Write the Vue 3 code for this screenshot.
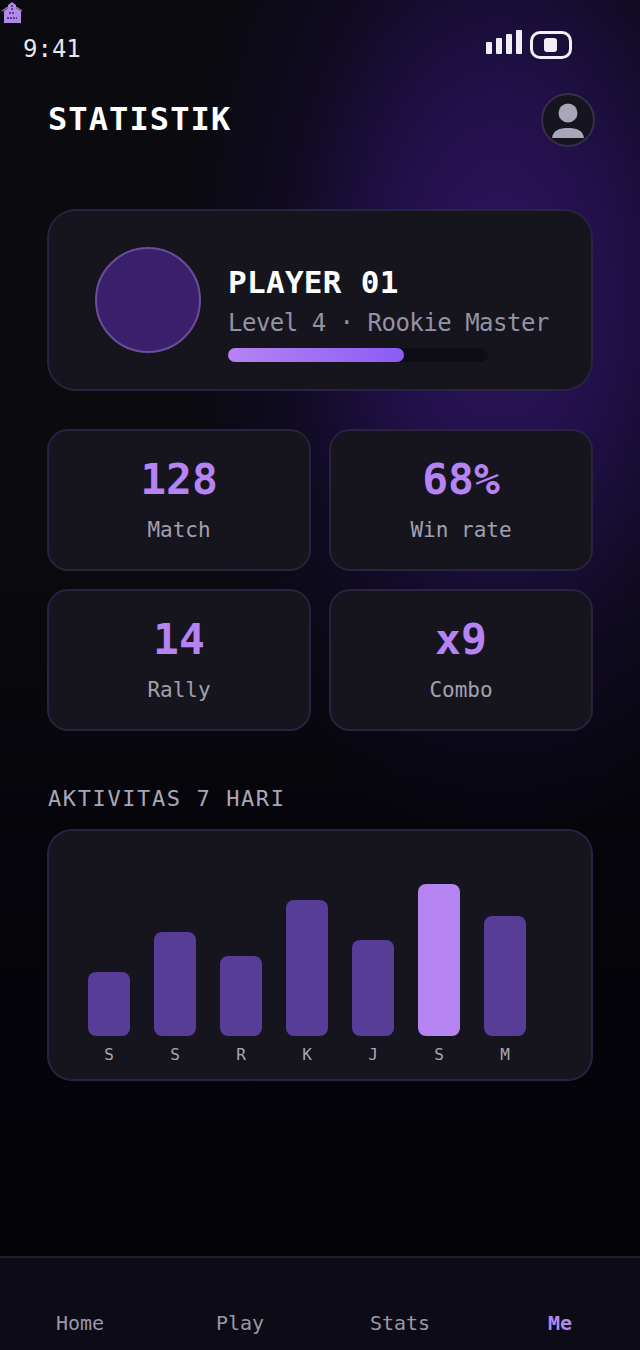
<script setup>
const stats = [
  { value: '128', label: 'Match' },
  { value: '68%', label: 'Win rate' },
  { value: '14', label: 'Rally' },
  { value: 'x9', label: 'Combo' },
];
const bars = [
  { day: 'S', height: 64 },
  { day: 'S', height: 104 },
  { day: 'R', height: 80 },
  { day: 'K', height: 136 },
  { day: 'J', height: 96 },
  { day: 'S', height: 152, active: true },
  { day: 'M', height: 120 },
];
const signal = [12, 16, 20, 24];
const tabs = ['Home', 'Play', 'Stats', 'Me'];
</script>

<template>
  <div class="screen">
    <svg class="corner-icon" width="22" height="24" viewBox="0 0 22 24">
      <path d="M11 2 L15 5 L15 8 L20 11 L20 23 L3 23 L3 11 L7 8 L7 5 Z" fill="#b388eb" />
      <path d="M1 11 L7 7 M21 11 L15 7" stroke="#8a7aa8" stroke-width="1.5" />
      <path d="M11 5 V10 M8 13 H14 M6 18 H16" stroke="#3a2a5c" stroke-width="1.5" stroke-dasharray="2 1" />
    </svg>

    <div class="status">
      <span class="time">9:41</span>
      <div class="status-right">
        <div class="signal">
          <i v-for="h in signal" :key="h" :style="{ height: h + 'px' }"></i>
        </div>
        <div class="battery"><i></i></div>
      </div>
    </div>

    <header class="top">
      <h1>STATISTIK</h1>
      <div class="avatar-small">
        <svg width="50" height="50" viewBox="0 0 50 50">
          <circle cx="25" cy="18" r="9.5" fill="#a9a6b8" />
          <path d="M9 43 C10 35 17 33 25 33 C33 33 40 35 41 43 Z" fill="#a9a6b8" />
        </svg>
      </div>
    </header>

    <section class="card profile">
      <div class="avatar"></div>
      <div class="info">
        <div class="name">PLAYER 01</div>
        <div class="level">Level 4 · Rookie Master</div>
        <div class="track"><div class="fill"></div></div>
      </div>
    </section>

    <section class="stats">
      <div v-for="s in stats" :key="s.label" class="card stat">
        <div class="value">{{ s.value }}</div>
        <div class="label">{{ s.label }}</div>
      </div>
    </section>

    <h2 class="section-title">AKTIVITAS 7 HARI</h2>

    <section class="card chart">
      <div v-for="(b, i) in bars" :key="i" class="col">
        <div class="bar" :class="{ active: b.active }" :style="{ height: b.height + 'px' }"></div>
        <span class="day">{{ b.day }}</span>
      </div>
    </section>

    <nav class="nav">
      <span v-for="t in tabs" :key="t" class="tab" :class="{ active: t === 'Me' }">{{ t }}</span>
    </nav>
  </div>
</template>

<style scoped>
.screen {
  position: relative;
  width: 640px;
  height: 1350px;
  display: flex;
  flex-direction: column;
  overflow: hidden;
  font-family: "DejaVu Sans Mono", "Liberation Mono", monospace;
  color: #fff;
  background:
    radial-gradient(ellipse 320px 560px at 500px 290px, #341668e8 0%, #2a1260b8 35%, #1a0c4060 68%, transparent 100%),
    linear-gradient(180deg, #0a0a0f 0%, #0a0a0f 40%, #05040a 65%, #040308 100%);
}

.corner-icon {
  position: absolute;
  left: 1px;
  top: 0;
}

.status {
  display: flex;
  justify-content: space-between;
  align-items: center;
  height: 30px;
  margin-top: 30px;
  padding: 0 68px 0 23px;
}

.time {
  font-size: 24px;
  color: #e8e6ef;
  margin-top: 8px;
  letter-spacing: 0;
}

.status-right {
  display: flex;
  align-items: flex-start;
  gap: 8px;
}

.signal {
  display: flex;
  align-items: flex-end;
  gap: 4px;
  height: 24px;
  margin-top: -1px;
}

.signal i {
  display: block;
  width: 6px;
  border-radius: 1px;
  background: #f1eff6;
}

.battery {
  width: 42px;
  height: 28px;
  box-sizing: border-box;
  border: 3px solid #f1eff6;
  border-radius: 10px;
  display: flex;
  align-items: center;
  justify-content: center;
}

.battery i {
  display: block;
  width: 13px;
  height: 14px;
  margin-right: 1px;
  border-radius: 3px;
  background: #f1eff6;
}

.top {
  display: flex;
  align-items: center;
  justify-content: space-between;
  margin-top: 33px;
  padding: 0 45px 0 48px;
}

h1 {
  margin: 0 0 2px;
  font-size: 32px;
  font-weight: 700;
  letter-spacing: 1.1px;
}

.avatar-small {
  width: 54px;
  height: 54px;
  box-sizing: border-box;
  border: 2px solid #35304a;
  border-radius: 50%;
  background: #16151f;
  overflow: hidden;
}

.avatar-small svg {
  display: block;
}

.card {
  box-sizing: border-box;
  background: #16151e;
  border: 1px solid #2a2340;
  box-shadow: 0 0 0 1px #2a2340;
}

.profile {
  margin: 63px 48px 0;
  height: 180px;
  border-radius: 28px;
  display: flex;
  align-items: center;
  gap: 27px;
  padding-left: 47px;
}

.avatar {
  width: 106px;
  height: 106px;
  box-sizing: border-box;
  border: 2px solid #6b4d9e;
  border-radius: 50%;
  background: #3a1f6b;
  margin-left: -1px;
}

.info {
  padding-top: 26px;
}

.name {
  font-size: 31px;
  font-weight: 700;
  line-height: 36px;
  letter-spacing: 0.3px;
}

.level {
  font-size: 24px;
  line-height: 30px;
  margin-top: 8px;
  color: #9492a3;
  letter-spacing: -0.5px;
  white-space: nowrap;
}

.track {
  width: 260px;
  height: 14px;
  margin-top: 10px;
  border-radius: 7px;
  background: #0e0d16;
}

.fill {
  width: 176px;
  height: 14px;
  border-radius: 7px;
  background: linear-gradient(90deg, #b583f2, #8b5cf6);
}

.stats {
  display: grid;
  grid-template-columns: 262px 262px;
  gap: 20px;
  margin: 40px 48px 0;
}

.stat {
  height: 140px;
  border-radius: 20px;
  display: flex;
  flex-direction: column;
  align-items: center;
}

.value {
  margin-top: 23px;
  font-size: 43px;
  line-height: 50px;
  font-weight: 700;
  color: #b583f2;
}

.label {
  margin-top: 12px;
  font-size: 21px;
  line-height: 28px;
  color: #a2a0b0;
}

.section-title {
  margin: 54px 48px 0;
  font-size: 22px;
  line-height: 30px;
  font-weight: 400;
  letter-spacing: 1.6px;
  color: #a9a6b8;
}

.chart {
  margin: 16px 48px 0;
  height: 250px;
  border-radius: 24px;
  display: flex;
  align-items: flex-end;
  gap: 24px;
  padding: 0 0 15px 39px;
}

.col {
  display: flex;
  flex-direction: column;
  align-items: center;
  width: 42px;
}

.bar {
  width: 42px;
  border-radius: 8px;
  background: #573c98;
}

.bar.active {
  background: #b583f2;
}

.day {
  margin-top: 8px;
  font-size: 16px;
  line-height: 20px;
  color: #a9a6b8;
  transform: translateY(1px);
}

.nav {
  position: absolute;
  left: 0;
  right: 0;
  bottom: 0;
  height: 94px;
  box-sizing: border-box;
  border-top: 2px solid #1f1b30;
  background: #0d0b15;
  display: grid;
  grid-template-columns: repeat(4, 160px);
  align-items: center;
  padding-top: 38px;
  justify-items: center;
}

.tab {
  font-size: 20px;
  color: #9a98a8;
}

.tab.active {
  font-weight: 700;
  color: #b388eb;
}
</style>
